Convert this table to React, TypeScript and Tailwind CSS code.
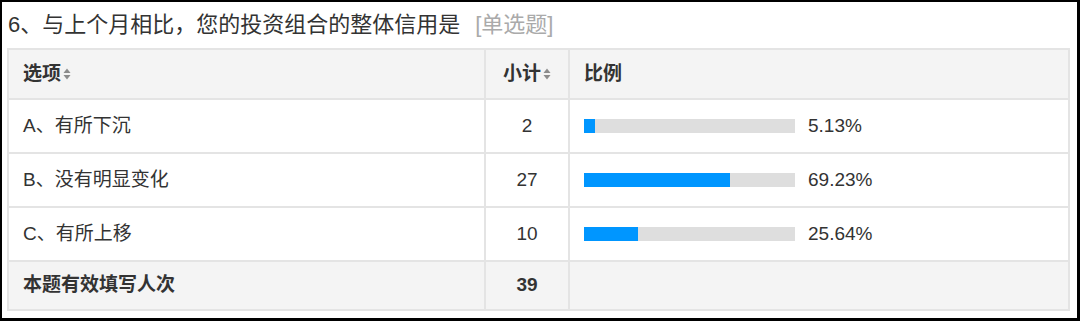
const ROWS = [
  { label: "A、有所下沉", count: 2, pct: 5.13 },
  { label: "B、没有明显变化", count: 27, pct: 69.23 },
  { label: "C、有所上移", count: 10, pct: 25.64 },
]

const FONT = { fontFamily: '"Liberation Sans", "Noto Sans CJK SC", sans-serif' }

function SortIcon() {
  return (
    <svg width="8" height="12" viewBox="0 0 8 12" className="ml-[2px] inline-block">
      <path d="M4 0.5 L7.5 5 L0.5 5 Z" fill="#8c8c8c" />
      <path d="M4 11.5 L7.5 7 L0.5 7 Z" fill="#8c8c8c" />
    </svg>
  )
}

export default function App() {
  return (
    <div
      className="w-[1080px] h-[321px] bg-white border-l-2 border-t-2 border-r-[3px] border-b-[3px] border-black text-[#333]"
      style={FONT}
    >
      <div className="h-[46px] pl-[6px] flex items-center text-[22px] leading-none">
        <span>6、与上个月相比，您的投资组合的整体信用是</span>
        <span className="ml-[15px] text-[#aaa]">[单选题]</span>
      </div>

      <table className="ml-[5px] w-[1061px] border-collapse table-fixed text-[19px]">
        <colgroup>
          <col className="w-[477px]" />
          <col className="w-[84px]" />
          <col className="w-[500px]" />
        </colgroup>
        <thead>
          <tr className="h-[50px] bg-[#f4f4f4] font-bold">
            <th className="border-2 border-[#e4e4e4] text-left pl-[14px]">
              <span className="inline-flex items-center">选项<SortIcon /></span>
            </th>
            <th className="border-2 border-[#e4e4e4] text-center">
              <span className="inline-flex items-center">小计<SortIcon /></span>
            </th>
            <th className="border-2 border-[#e4e4e4] text-left pl-[14px]">比例</th>
          </tr>
        </thead>
        <tbody>
          {ROWS.map((r) => (
            <tr key={r.label} className="h-[54px]">
              <td className="border-2 border-[#e4e4e4] pl-[14px]">{r.label}</td>
              <td className="border-2 border-[#e4e4e4] text-center">{r.count}</td>
              <td className="border-2 border-[#e4e4e4] pl-[14px]">
                <div className="flex items-center">
                  <div className="w-[211px] h-[14px] bg-[#dedede]">
                    <div className="h-full bg-[#0096ff]" style={{ width: `${r.pct}%` }} />
                  </div>
                  <span className="ml-[13px]">{r.pct.toFixed(2)}%</span>
                </div>
              </td>
            </tr>
          ))}
          <tr className="h-[49px] bg-[#f4f4f4] font-bold">
            <td className="border-2 border-[#e4e4e4] pl-[14px]">本题有效填写人次</td>
            <td className="border-2 border-[#e4e4e4] text-center">39</td>
            <td className="border-2 border-[#e4e4e4]"></td>
          </tr>
        </tbody>
      </table>
    </div>
  )
}
